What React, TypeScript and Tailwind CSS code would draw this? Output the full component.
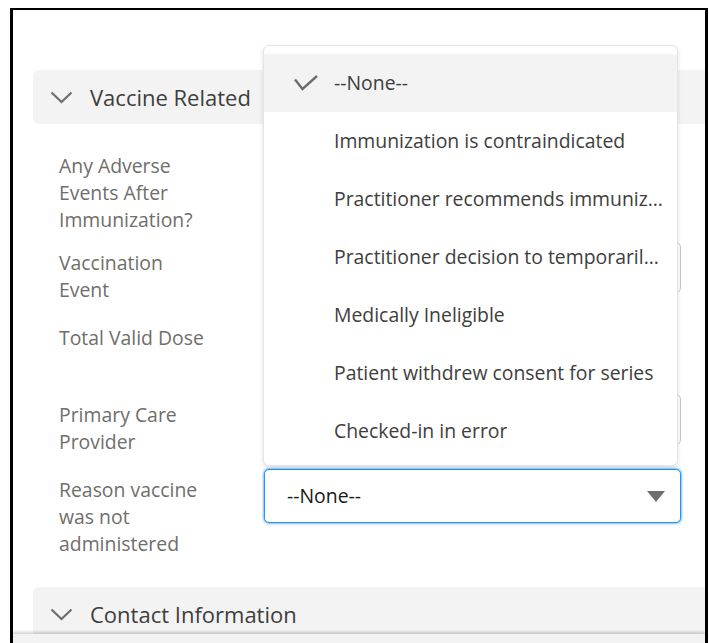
import React from "react";

const reasons = [
  "--None--",
  "Immunization is contraindicated",
  "Practitioner recommends immunization be delayed",
  "Practitioner decision to temporarily defer immunization",
  "Medically Ineligible",
  "Patient withdrew consent for series",
  "Checked-in in error",
];

const Chevron = () => (
  <svg width="23" height="13" viewBox="0 0 23 13" className="shrink-0">
    <polyline points="1.5,1.5 11.5,11 21.5,1.5" fill="none" stroke="#706e6b" strokeWidth="2.2" />
  </svg>
);

const SectionHeader = ({ title }: { title: string }) => (
  <div className="flex h-[54px] items-center gap-[17px] rounded-l-md bg-[#f3f3f3] pl-[17px] -mr-[8px]">
    <Chevron />
    <span className="text-[22px] text-[#3e3e3c]">{title}</span>
  </div>
);

const TextInput = () => (
  <div className="h-[51px] w-full rounded-[5px] border border-[#c9c9c9] bg-white" />
);

const ReasonMenu = () => (
  <div className="absolute bottom-[calc(100%+3px)] -left-px z-10 w-[415px] rounded-[6px] border border-[#e5e5e5] bg-white pt-2 pb-[5px] shadow-[0_2px_4px_rgba(0,0,0,0.12)]">
    {reasons.map((r, i) => (
      <div
        key={r}
        className={`flex h-[58px] items-center pl-[30px] pr-[14px] ${i === 0 ? "bg-[#f3f3f3]" : ""}`}
      >
        <span className="w-[40px] shrink-0">
          {i === 0 && (
            <svg width="24" height="16" viewBox="0 0 24 16">
              <polyline points="1,4.5 8.5,14 23,1" fill="none" stroke="#706e6b" strokeWidth="2.4" />
            </svg>
          )}
        </span>
        <span className="truncate text-[19.4px] text-[#3e3e3c]">{r}</span>
      </div>
    ))}
  </div>
);

const Row = ({ label, h, children }: { label: string; h: string; children?: React.ReactNode }) => (
  <div className={`flex ${h}`}>
    <div className="w-[231px] shrink-0 pt-[7px] pl-[26px] pr-[55px] text-[19.4px] leading-[27px] text-[#706e6b]">
      {label}
    </div>
    <div className="relative w-[417px]">{children}</div>
  </div>
);

export default function App() {
  return (
    <div className="h-[643px] w-[709px] overflow-hidden bg-white pt-[8px] pl-[10px] pr-px font-['Open_Sans',sans-serif]">
      <div className="relative h-[635px] overflow-hidden border-t-2 border-r-[3px] border-l-[3px] border-black bg-white">
        <div className="pt-[60px] pl-[20px]">
          <SectionHeader title="Vaccine Related" />

          <div className="mt-[21px] flex flex-col">
            <Row label="Any Adverse Events After Immunization?" h="h-[97px]" />
            <Row label="Vaccination Event" h="h-[75px]">
              <TextInput />
            </Row>
            <Row label="Total Valid Dose" h="h-[77px]" />
            <Row label="Primary Care Provider" h="h-[75px]">
              <TextInput />
            </Row>
            <Row label="Reason vaccine was not administered" h="h-auto">
              <div className="relative">
                <ReasonMenu />
                <div className="flex h-[54px] items-center justify-between rounded-[5px] border border-[#1b96ff] bg-white pr-[15px] pl-[22px] shadow-[0_0_3px_#0176d3]">
                  <span className="text-[19.4px] text-[#181818]">--None--</span>
                  <svg width="18" height="11" viewBox="0 0 18 11">
                    <polygon points="0,0 18,0 9,11" fill="#706e6b" />
                  </svg>
                </div>
              </div>
            </Row>
          </div>

          <div className="mt-[30px]">
            <SectionHeader title="Contact Information" />
          </div>
        </div>

        {/* docked footer bar */}
        <div className="absolute right-0 bottom-0 left-0 h-[9px] bg-[#f3f3f3] shadow-[0_-2px_3px_rgba(0,0,0,0.18)]" />
      </div>
    </div>
  );
}
